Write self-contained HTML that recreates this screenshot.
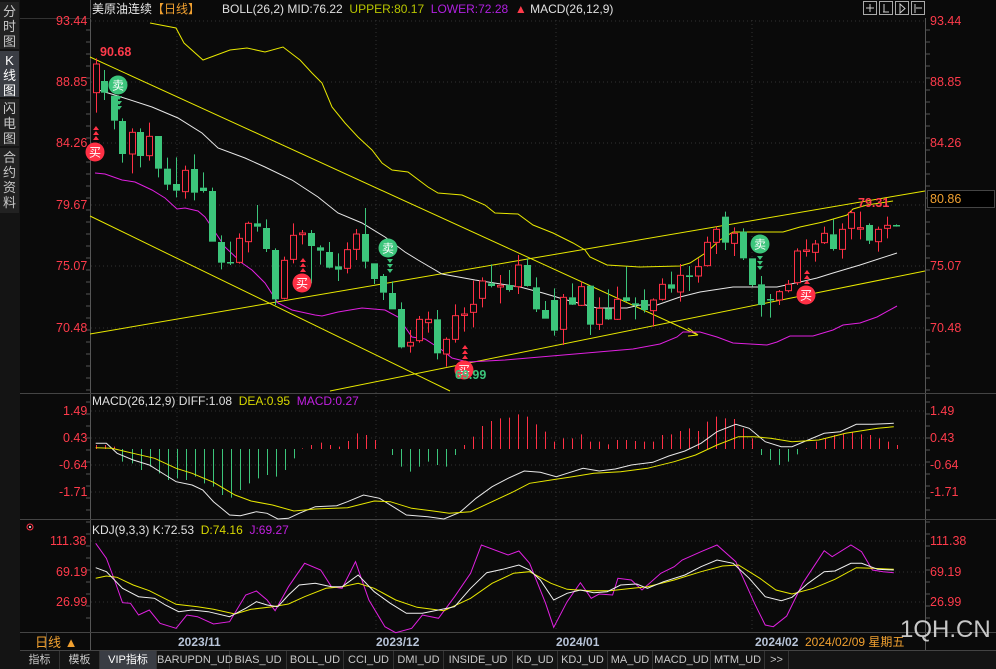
<!DOCTYPE html>
<html><head><meta charset="utf-8"><style>
*{margin:0;padding:0;box-sizing:border-box}
body{width:996px;height:669px;background:#0a0a0a;overflow:hidden;font-family:"Liberation Sans","Noto Sans CJK SC",sans-serif;position:relative}
.side{position:absolute;left:0;top:0;width:20px;height:669px;background:#141414}
.side div{position:absolute;left:0;width:19px;background:#222;color:#c8c8c8;font-size:13px;line-height:15px;text-align:center}
.side .sel{background:#3a3d44;color:#fff}
.t{position:absolute;white-space:nowrap;font-size:12px;line-height:14px}
.lab{position:absolute;font-size:12.5px;color:#ff3b4b;line-height:14px}
.tabs{position:absolute;left:20px;top:651px;width:976px;height:18px;background:#141414;font-size:11px;color:#c8c8c8}
.tabs span{position:absolute;top:0;height:18px;line-height:18px;border-right:1px solid #333;text-align:center}
</style></head><body>
<div class="side">
<div style="top:2px;height:47px;padding-top:2px">分<br>时<br>图</div>
<div class="sel" style="top:51px;height:46px;padding-top:2px">K<br>线<br>图</div>
<div style="top:99px;height:47px;padding-top:2px">闪<br>电<br>图</div>
<div style="top:148px;height:65px;padding-top:2px">合<br>约<br>资<br>料</div>
</div>
<svg id="s" width="996" height="669" style="position:absolute;left:0;top:0"></svg>
<div class="t" style="left:92px;top:2px;color:#e8e8e8">美原油连续<span style="color:#f0a030">【日线】</span></div>
<div class="t" style="left:222px;top:2px;color:#e0e0e0;font-size:12px">BOLL(26,2) MID:76.22 &nbsp;<span style="color:#b8c400">UPPER:80.17</span> &nbsp;<span style="color:#b020e0">LOWER:72.28</span> &nbsp;<span style="color:#ff3b4b">▲</span> MACD(26,12,9)</div>
<div class="t" style="left:92px;top:394px;color:#e0e0e0">MACD(26,12,9) DIFF:1.08 &nbsp;<span style="color:#d8d800">DEA:0.95</span> &nbsp;<span style="color:#c020e0">MACD:0.27</span></div>
<div class="t" style="left:92px;top:523px;color:#e0e0e0">KDJ(9,3,3) K:72.53 &nbsp;<span style="color:#d8d800">D:74.16</span> &nbsp;<span style="color:#c020e0">J:69.27</span></div>
<div class="lab" style="left:56px;top:14px">93.44</div><div class="lab" style="left:56px;top:75px">88.85</div><div class="lab" style="left:56px;top:136px">84.26</div><div class="lab" style="left:56px;top:198px">79.67</div><div class="lab" style="left:56px;top:259px">75.07</div><div class="lab" style="left:56px;top:321px">70.48</div>
<div class="lab" style="left:930px;top:14px">93.44</div><div class="lab" style="left:930px;top:75px">88.85</div><div class="lab" style="left:930px;top:136px">84.26</div><div class="lab" style="left:930px;top:259px">75.07</div><div class="lab" style="left:930px;top:321px">70.48</div>
<div style="position:absolute;left:927px;top:190px;width:68px;height:18px;border:1px solid #444;background:#000"></div>
<div class="lab" style="left:930px;top:192px;color:#f0a030">80.86</div>
<div class="lab" style="left:63px;top:404px">1.49</div><div class="lab" style="left:63px;top:431px">0.43</div><div class="lab" style="left:59px;top:458px">-0.64</div><div class="lab" style="left:59px;top:485px">-1.71</div>
<div class="lab" style="left:930px;top:404px">1.49</div><div class="lab" style="left:930px;top:431px">0.43</div><div class="lab" style="left:930px;top:458px">-0.64</div><div class="lab" style="left:930px;top:485px">-1.71</div>
<div class="lab" style="left:50px;top:534px">111.38</div><div class="lab" style="left:56px;top:565px">69.19</div><div class="lab" style="left:56px;top:595px">26.99</div>
<div class="lab" style="left:930px;top:534px">111.38</div><div class="lab" style="left:930px;top:565px">69.19</div><div class="lab" style="left:930px;top:595px">26.99</div>
<div class="lab" style="left:100px;top:45px;font-weight:bold">90.68</div>
<div class="lab" style="left:858px;top:196px;font-weight:bold">79.31</div>
<div class="lab" style="left:455px;top:368px;color:#3cc57b;font-weight:bold">69.99</div>
<div class="t" style="left:35px;top:636px;color:#f0a030;font-size:13px">日线 ▲</div>
<div class="t" style="left:178px;top:635px;color:#b8c4d8;font-size:12px;font-weight:bold">2023/11</div>
<div class="t" style="left:376px;top:635px;color:#b8c4d8;font-size:12px;font-weight:bold">2023/12</div>
<div class="t" style="left:556px;top:635px;color:#b8c4d8;font-size:12px;font-weight:bold">2024/01</div>
<div class="t" style="left:755px;top:635px;color:#b8c4d8;font-size:12px;font-weight:bold">2024/02</div>
<div class="t" style="left:805px;top:635px;color:#f0a030;font-size:12px">2024/02/09 星期五</div>
<div class="t" style="left:900px;top:616px;color:#e8e8e8;font-size:24px;line-height:28px;opacity:.85">1QH.CN</div>
<div class="tabs">
<span style="left:0;width:40px">指标</span><span style="left:40px;width:40px">模板</span><span style="left:80px;width:57px;background:#3a3d44;color:#fff">VIP指标</span><span style="left:137px;width:73px">BARUPDN_UD</span><span style="left:210px;width:57px">BIAS_UD</span><span style="left:267px;width:57px">BOLL_UD</span><span style="left:324px;width:50px">CCI_UD</span><span style="left:374px;width:50px">DMI_UD</span><span style="left:424px;width:69px">INSIDE_UD</span><span style="left:493px;width:45px">KD_UD</span><span style="left:538px;width:50px">KDJ_UD</span><span style="left:588px;width:45px">MA_UD</span><span style="left:633px;width:58px">MACD_UD</span><span style="left:691px;width:54px">MTM_UD</span><span style="left:745px;width:24px">&gt;&gt;</span>
</div>
<script>
var s=document.getElementById('s'),h='';
function L(x1,y1,x2,y2,c,w,d){h+='<line x1="'+x1+'" y1="'+y1+'" x2="'+x2+'" y2="'+y2+'" stroke="'+c+'" stroke-width="'+(w||1)+'"'+(d?' stroke-dasharray="'+d+'"':'')+'/>';}
function P(pts,c,w){h+='<polyline fill="none" stroke="'+c+'" stroke-width="'+(w||1)+'" points="'+pts.join(' ')+'"/>';}
function Z(a,ox,oy,sx,sy){var r=[];for(var i=0;i<a.length;i+=2)r.push((ox+a[i]/sx).toFixed(1)+','+(oy+a[i+1]/sy).toFixed(1));return r;}
[21,82,143,205,266,328,411,438,465,492,541,572,602].forEach(function(y){L(91,y,925,y,'#333',1,'1 3');});
[177,376,556,752].forEach(function(x){L(x,20,x,632,'#333',1,'1 3');});
L(90.5,0,90.5,650,'#555');L(925.5,18,925.5,650,'#555');
L(20,393.5,996,393.5,'#444');L(20,519.5,996,519.5,'#444');L(20,632.5,996,632.5,'#444');L(20,650.5,996,650.5,'#444');
L(46.5,633,46.5,650,'#444');L(20,18.5,91,18.5,'#333');
for(var y=30;y<630;y+=12){L(86,y,90,y,'#555');L(926,y,930,y,'#555');}
[863,879,895,911].forEach(function(x){h+='<rect x="'+(x+.5)+'" y="1.5" width="13" height="13" fill="none" stroke="#aaa"/>';});
h+='<path d="M866 8h8M870 4v8M884 4v8M883 12h6M900 4v9l5-4.5zM915 4v9M916 8h6" stroke="#ccc" fill="none"/>';
L(90,57,698,335,'#e8e800');L(688,328,698,335,'#e8e800');L(688,336,698,335,'#e8e800');
L(90,216,450,391,'#e8e800');L(90,334,925,191,'#e8e800');L(330,391,925,271,'#e8e800');
P(Z([150,23,176,28,184,43,203,60,230,50,247,48,265,52,283,47,300,60,312,73,322,83,332,107,345,123,358,137,372,150,382,163,392,170,408,172,428,187,438,193,462,195,485,205,495,213,518,214,533,225,553,233,573,243,585,250,590,257,607,265,640,267,680,266,690,263,707,252,720,240,733,232,783,232,800,227,823,222,847,215,853,209,867,205,893,201],0,0,1,1),'#e8e800');
P(Z([95,89,118,96,152,107,178,118,202,133,218,148,245,158,265,167,292,180,318,197,338,213,362,223,385,237,405,252,418,260,442,274,475,280,520,287,543,293,563,299,597,308,627,308,640,305,657,305,680,297,700,292,733,287,777,287,800,282,817,278,833,273,860,265,897,253],0,0,1,1),'#e8e8e8');
P(Z([95,173,105,174,122,180,135,182,152,190,165,198,177,209,185,208,198,211,205,217,215,232,225,247,242,263,252,270,265,283,278,303,292,310,315,315,322,316,338,312,362,308,385,310,398,317,412,337,425,339,442,350,452,358,468,362,505,360,633,349,660,344,677,337,683,332,700,332,717,337,733,343,767,345,777,342,790,336,813,336,833,330,843,325,860,323,877,317,897,306],0,0,1,1),'#e020e0');
var A=[[32,1,42,128,25,188],[58,0,93,128,60,150],[86,0,137,212,137,238],[112,0,213,312,205,338],[140,1,247,312,235,370],[166,0,246,318,235,352],[193,1,259,317,218,332],[220,0,258,356,258,382],[247,0,356,404,323,420],[274,0,402,422,322,442],[301,1,361,425,347,446],[328,0,357,428,313,451],[355,0,413,423,367,428],[382,0,423,575,413,575],[409,0,576,638,556,658],[436,0,636,639,575,645],[463,1,565,637,550,641],[490,1,520,575,515,607],[517,0,520,530,465,545],[544,0,534,597,508,606],[571,0,600,748,595,765],[598,1,631,745,620,748],[625,1,556,628,520,640],[652,1,549,554,540,583],[679,0,549,588,540,700],[706,0,592,602,586,644],[733,0,606,653,576,655],[760,0,649,659,610,693],[787,1,599,655,577,670],[814,1,552,598,537,630],[841,0,552,635,474,655],[868,0,640,687,640,702],[895,0,678,728,672,750],[922,0,729,778,694,778],[949,0,777,892,757,895],[976,1,877,888,840,908],[1003,1,808,872,798,878],[1030,1,808,818,785,848],[1057,0,808,910,780,928],[1084,1,868,912,862,950],[1111,1,797,868,763,878],[1138,1,792,796,772,845],[1165,1,763,787,692,832],[1192,1,693,745,682,772],[1219,0,700,708,643,712],[1246,1,706,711,675,760]];
var B=[[28,0,285,300,240,305],[55,1,225,290,195,312],[82,0,225,288,205,290],[109,0,292,358,262,366],[136,0,360,386,333,386],[163,0,330,422,295,437],[190,1,322,418,312,465],[217,0,322,344,280,345],[244,1,290,346,275,348],[271,0,287,404,287,435],[298,1,355,403,322,420],[325,0,355,388,298,390],[352,1,328,388,290,390],[379,0,322,333,230,335],[406,0,340,346,322,388],[433,0,330,360,298,368],[460,1,330,362,325,410],[487,1,283,328,265,332],[514,0,283,296,245,308],[541,1,256,306,222,335],[568,0,256,261,228,303],[595,1,230,258,205,278],[622,1,157,227,140,230],[649,1,118,157,110,192],[676,0,80,158,65,180],[703,1,130,160,112,198],[730,0,125,205,115,210],[757,0,205,285,205,290],[784,0,283,345,258,380],[811,0,327,330,312,383],[838,1,305,330,300,345],[865,1,283,302,270,307],[892,1,183,278,175,285],[919,1,180,183,148,200],[946,1,162,187,150,215],[973,1,130,158,110,162],[1000,0,133,177,88,182],[1027,1,118,178,100,206],[1054,1,68,115,60,148],[1081,1,113,116,65,148],[1108,0,105,152,100,162],[1135,1,118,155,110,185],[1162,1,106,115,80,145],[1189,0,105,108,103,110]];
function C(a,ox,oy){a.forEach(function(c){var x=Math.round(ox+c[0]/3)+.5,bt=oy+c[2]/3,bb=oy+c[3]/3,wt=oy+c[4]/3,wb=oy+c[5]/3,col=c[1]?'#ff3045':'#3cc57b';
L(x,wt,x,bt,col);L(x,bb,x,wb,col);var hh=Math.max(bb-bt,1.5);
if(c[1])h+='<rect x="'+(x-3)+'" y="'+bt+'" width="6" height="'+hh+'" fill="#0a0a0a" stroke="'+col+'"/>';else h+='<rect x="'+(x-3.5)+'" y="'+bt+'" width="7" height="'+hh+'" fill="'+col+'"/>';});}
C(A,85,50);C(B,500,190);
function M(x,y,t,c){h+='<circle cx="'+x+'" cy="'+y+'" r="9.5" fill="'+c+'"/><text x="'+x+'" y="'+(y+4.5)+'" font-size="12" fill="#fff" text-anchor="middle" font-family="Noto Sans CJK SC">'+t+'</text>';}
function Tr(x,y,up,c){for(var i=0;i<3;i++){var yy=y+i*5;h+=up?'<path d="M'+(x-3)+' '+(yy+4)+'h6l-3-4z" fill="'+c+'"/>':'<path d="M'+(x-3)+' '+yy+'h6l-3 4z" fill="'+c+'"/>';}}
M(118,85,'卖','#3cc57b');Tr(119,96,0,'#3cc57b');M(388,248,'卖','#3cc57b');Tr(390,259,0,'#3cc57b');M(760,244,'卖','#3cc57b');Tr(760,256,0,'#3cc57b');
M(95,152,'买','#ff3045');Tr(96,126,1,'#ff3045');M(302,283,'买','#ff3045');Tr(303,258,1,'#ff3045');M(464,370,'买','#ff3045');Tr(465,345,1,'#ff3045');M(806,295,'买','#ff3045');Tr(807,270,1,'#ff3045');
var sx=1.867;
function bar(zx,zy){var x=Math.round(85+zx/sx)+.5,y=395+zy/3;L(x,449,x,y,y<449?'#ff3045':'#3cc57b');}
[[20,150],[37,150],[54,155]].forEach(function(b){bar(b[0],b[1]);});
[200,205,225,215,235,255,250,255,245,265,275,300,308,285,265,250,240,245,225,190].forEach(function(v,i){bar(70+i*16.85,v);});
[160,150,143,150,155,138,115,120,135].forEach(function(v,i){bar(406+i*16.85,v);});
[180,215,230,215,200,210,215,180].forEach(function(v,i){bar(573+i*16.85,v);});
[150,125,93,78,70,68,58,65,88,110,140,130,130,118,140,140,148,135,135,138,140,140,120,118,108,100,108,80,65,70,72,100,130].forEach(function(v,i){bar(707+i*16.85,v);});
[180,195,210,200,178].forEach(function(v,i){bar(1262+i*16.85,v);});
[160,140,130,120,115,112,118,120,130,140,150].forEach(function(v,i){bar(1347+i*16.85,v);});
P(Z([20,145,40,145,60,175,90,195,120,210,150,240,170,260,200,270,220,285,240,320,270,360,290,362,320,350,340,355,360,372,380,370,400,355,430,335,470,332,490,320,520,300,550,310,580,340,600,360,640,365,670,372,700,352,730,310,760,275,790,250,820,228,850,232,880,245,900,235,930,220,960,228,990,222,1020,210,1060,202,1090,183,1120,168,1150,145,1180,110,1215,88,1240,100,1270,140,1300,155,1320,155,1350,135,1380,115,1410,110,1440,88,1470,88,1510,85],85,395,sx,3),'#e8e8e8');
P(Z([20,158,50,160,90,175,130,190,170,220,200,235,240,262,280,300,310,318,350,330,390,348,430,342,490,338,540,318,570,320,610,340,650,348,680,355,720,350,760,320,800,290,830,265,870,255,910,245,950,235,1000,230,1050,220,1100,200,1140,180,1180,150,1220,125,1250,125,1280,130,1320,140,1370,135,1420,115,1480,100,1510,95],85,395,sx,3),'#e8e800');
P(Z([20,70,40,115,55,180,70,248,85,250,100,285,120,270,140,310,170,325,190,285,210,290,240,312,270,305,300,225,320,213,340,240,355,272,380,200,410,130,440,150,460,200,480,205,505,125,530,240,560,320,580,338,610,325,630,285,660,295,690,230,720,160,740,75,790,105,810,93,830,130,860,250,875,322,900,245,925,188,945,235,960,222,985,225,995,175,1020,180,1040,210,1075,160,1100,140,1115,120,1150,95,1180,75,1215,125,1250,250,1270,315,1285,320,1310,288,1340,190,1380,92,1395,110,1430,75,1450,95,1470,150,1490,155,1510,158],85,520,sx,3),'#e020e0');
P(Z([20,175,40,168,60,172,90,195,120,212,170,253,210,260,240,268,280,282,310,268,350,260,380,252,410,230,450,205,480,200,510,190,540,205,580,240,620,262,670,272,720,235,760,190,800,160,830,155,870,190,900,208,940,212,980,212,1050,200,1100,180,1150,155,1190,138,1220,135,1260,175,1290,210,1320,222,1360,205,1400,178,1440,143,1470,145,1510,148],85,520,sx,3),'#e8e800');
P(Z([20,143,40,155,70,205,100,230,130,235,150,255,175,275,200,270,230,275,270,290,300,265,320,245,340,255,360,260,380,225,400,195,430,190,460,200,480,200,510,165,540,215,570,250,600,280,630,280,660,270,690,260,720,205,750,158,780,148,810,135,830,150,850,180,875,240,900,220,925,210,950,218,975,215,1000,195,1030,192,1050,205,1080,185,1120,165,1150,140,1180,120,1210,130,1240,175,1270,230,1300,242,1320,232,1350,190,1380,155,1400,153,1430,130,1450,130,1480,148,1510,150],85,520,sx,3),'#f0f0f0');
h+='<circle cx="30" cy="527" r="3" fill="none" stroke="#ff3045"/><circle cx="30" cy="527" r="1" fill="#fff"/>';
s.innerHTML=h;
</script>
</body></html>
